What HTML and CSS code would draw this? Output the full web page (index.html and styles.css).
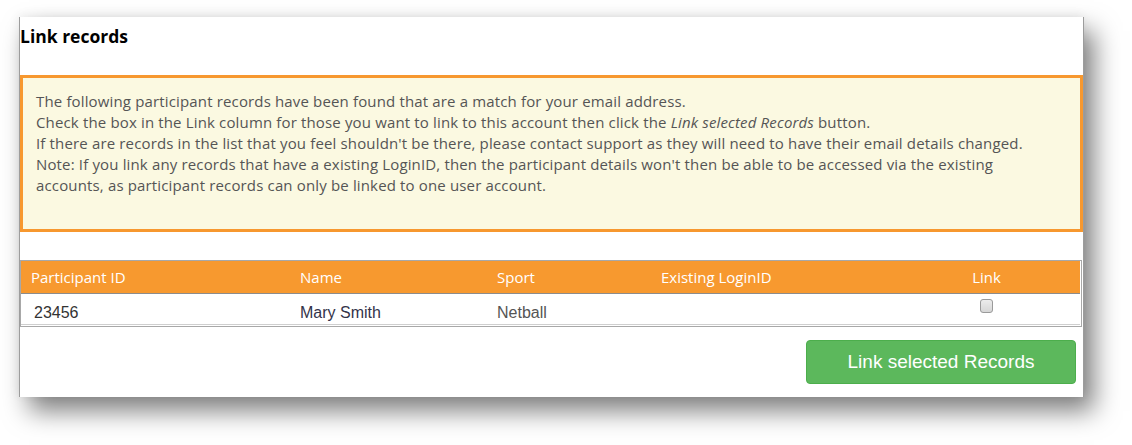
FILE: index.html
```html
<!DOCTYPE html>
<html lang="en">
<head>
<meta charset="utf-8">
<title>Link records</title>
<link rel="stylesheet" href="styles.css">
</head>
<body>
<div class="shot">
  <h2 class="title">Link records</h2>
  <div class="notice">
    <p>The following participant records have been found that are a match for your email address.<br>
    Check the box in the Link column for those you want to link to this account then click the <em>Link selected Records</em> button.<br>
    If there are records in the list that you feel shouldn't be there, please contact support as they will need to have their email details changed.<br>
    Note: If you link any records that have a existing LoginID, then the participant details won't then be able to be accessed via the existing accounts, as participant records can only be linked to one user account.</p>
  </div>
  <div class="grid-wrap">
    <table class="grid">
      <thead>
        <tr>
          <th class="c-id">Participant ID</th>
          <th class="c-name">Name</th>
          <th class="c-sport">Sport</th>
          <th class="c-login">Existing LoginID</th>
          <th class="c-link">Link</th>
        </tr>
      </thead>
      <tbody>
        <tr>
          <td class="c-id">23456</td>
          <td class="c-name">Mary Smith</td>
          <td class="c-sport">Netball</td>
          <td class="c-login"></td>
          <td class="c-link"><input type="checkbox" class="chk" aria-label="Link"></td>
        </tr>
      </tbody>
    </table>
  </div>
  <div class="actions">
    <button type="button" class="btn">Link selected Records</button>
  </div>
</div>
</body>
</html>
```

FILE: styles.css
```css
html, body {
  margin: 0;
  background: #ffffff;
}
body {
  padding: 17px 0 0 19px;
  min-height: 445px;
  box-sizing: border-box;
}
.shot {
  width: 1065px;
  height: 380px;
  box-sizing: border-box;
  background: #ffffff;
  border-left: 1px solid #9c9c9c;
  border-right: 1px solid #9c9c9c;
  box-shadow: 10px 14px 24px rgba(0, 0, 0, 0.5), -1px -2px 10px rgba(0, 0, 0, 0.06);
  font-family: "Open Sans", "Noto Sans", sans-serif;
}
.title {
  margin: 0;
  padding: 7px 0 0 0;
  height: 50px;
  box-sizing: border-box;
  font-size: 17.5px;
  line-height: 24px;
  font-weight: 700;
  color: #000;
}
.notice {
  margin-top: 8px;
  height: 157px;
  box-sizing: border-box;
  border: 3px solid #f7982f;
  background: #fbf9e1;
  padding: 13px 40px 0 13px;
}
.notice p {
  margin: 0;
  font-size: 15px;
  line-height: 21px;
  color: #555555;
  letter-spacing: 0.15px;
}
.notice em {
  font-style: italic;
}
.grid-wrap {
  margin-top: 28px;
  width: 1062px;
  box-sizing: border-box;
  border: 1px solid #a8a8a8;
  padding: 0 1px 1px 0;
}
.grid {
  width: 100%;
  border-collapse: collapse;
  table-layout: fixed;
}
.grid th {
  background: #f7992f;
  color: #ffffff;
  font-weight: 400;
  font-size: 15px;
  text-align: left;
  height: 32px;
  padding: 0 0 0 10px;
  border-bottom: 1px solid #8c8c8c;
  vertical-align: middle;
}
.grid td {
  font-family: "Liberation Sans", Arial, sans-serif;
  font-size: 16px;
  line-height: 20px;
  color: #33334a;
  height: 20px;
  padding: 9px 0 1px 10px;
  border-bottom: 1px solid #cfcfcf;
  vertical-align: top;
}
.grid td.c-id {
  padding-left: 13px;
  color: #333;
}
.grid td.c-sport {
  color: #555;
}
.c-id { width: 259px; }
.c-name { width: 187px; }
.c-sport { width: 154px; }
.c-login { width: 232px; }
.grid .c-link {
  text-align: center;
  padding-left: 0;
}
.grid td.c-link {
  padding-top: 5px;
  padding-bottom: 5px;
}
.chk {
  appearance: none;
  -webkit-appearance: none;
  margin: 0;
  width: 13px;
  height: 14px;
  border: 1px solid #9a9a9a;
  border-radius: 3px;
  background: linear-gradient(#ececec, #d6d6d6);
  box-sizing: border-box;
  display: inline-block;
  vertical-align: top;
}
.actions {
  display: flex;
  justify-content: flex-end;
  padding: 13px 7px 0 0;
}
.btn {
  width: 270px;
  height: 44px;
  box-sizing: border-box;
  border: 1px solid #4cae4c;
  border-radius: 4px;
  background: #5cb85c;
  color: #ffffff;
  font-family: "Liberation Sans", Arial, sans-serif;
  font-size: 19px;
  padding: 0;
}
```
